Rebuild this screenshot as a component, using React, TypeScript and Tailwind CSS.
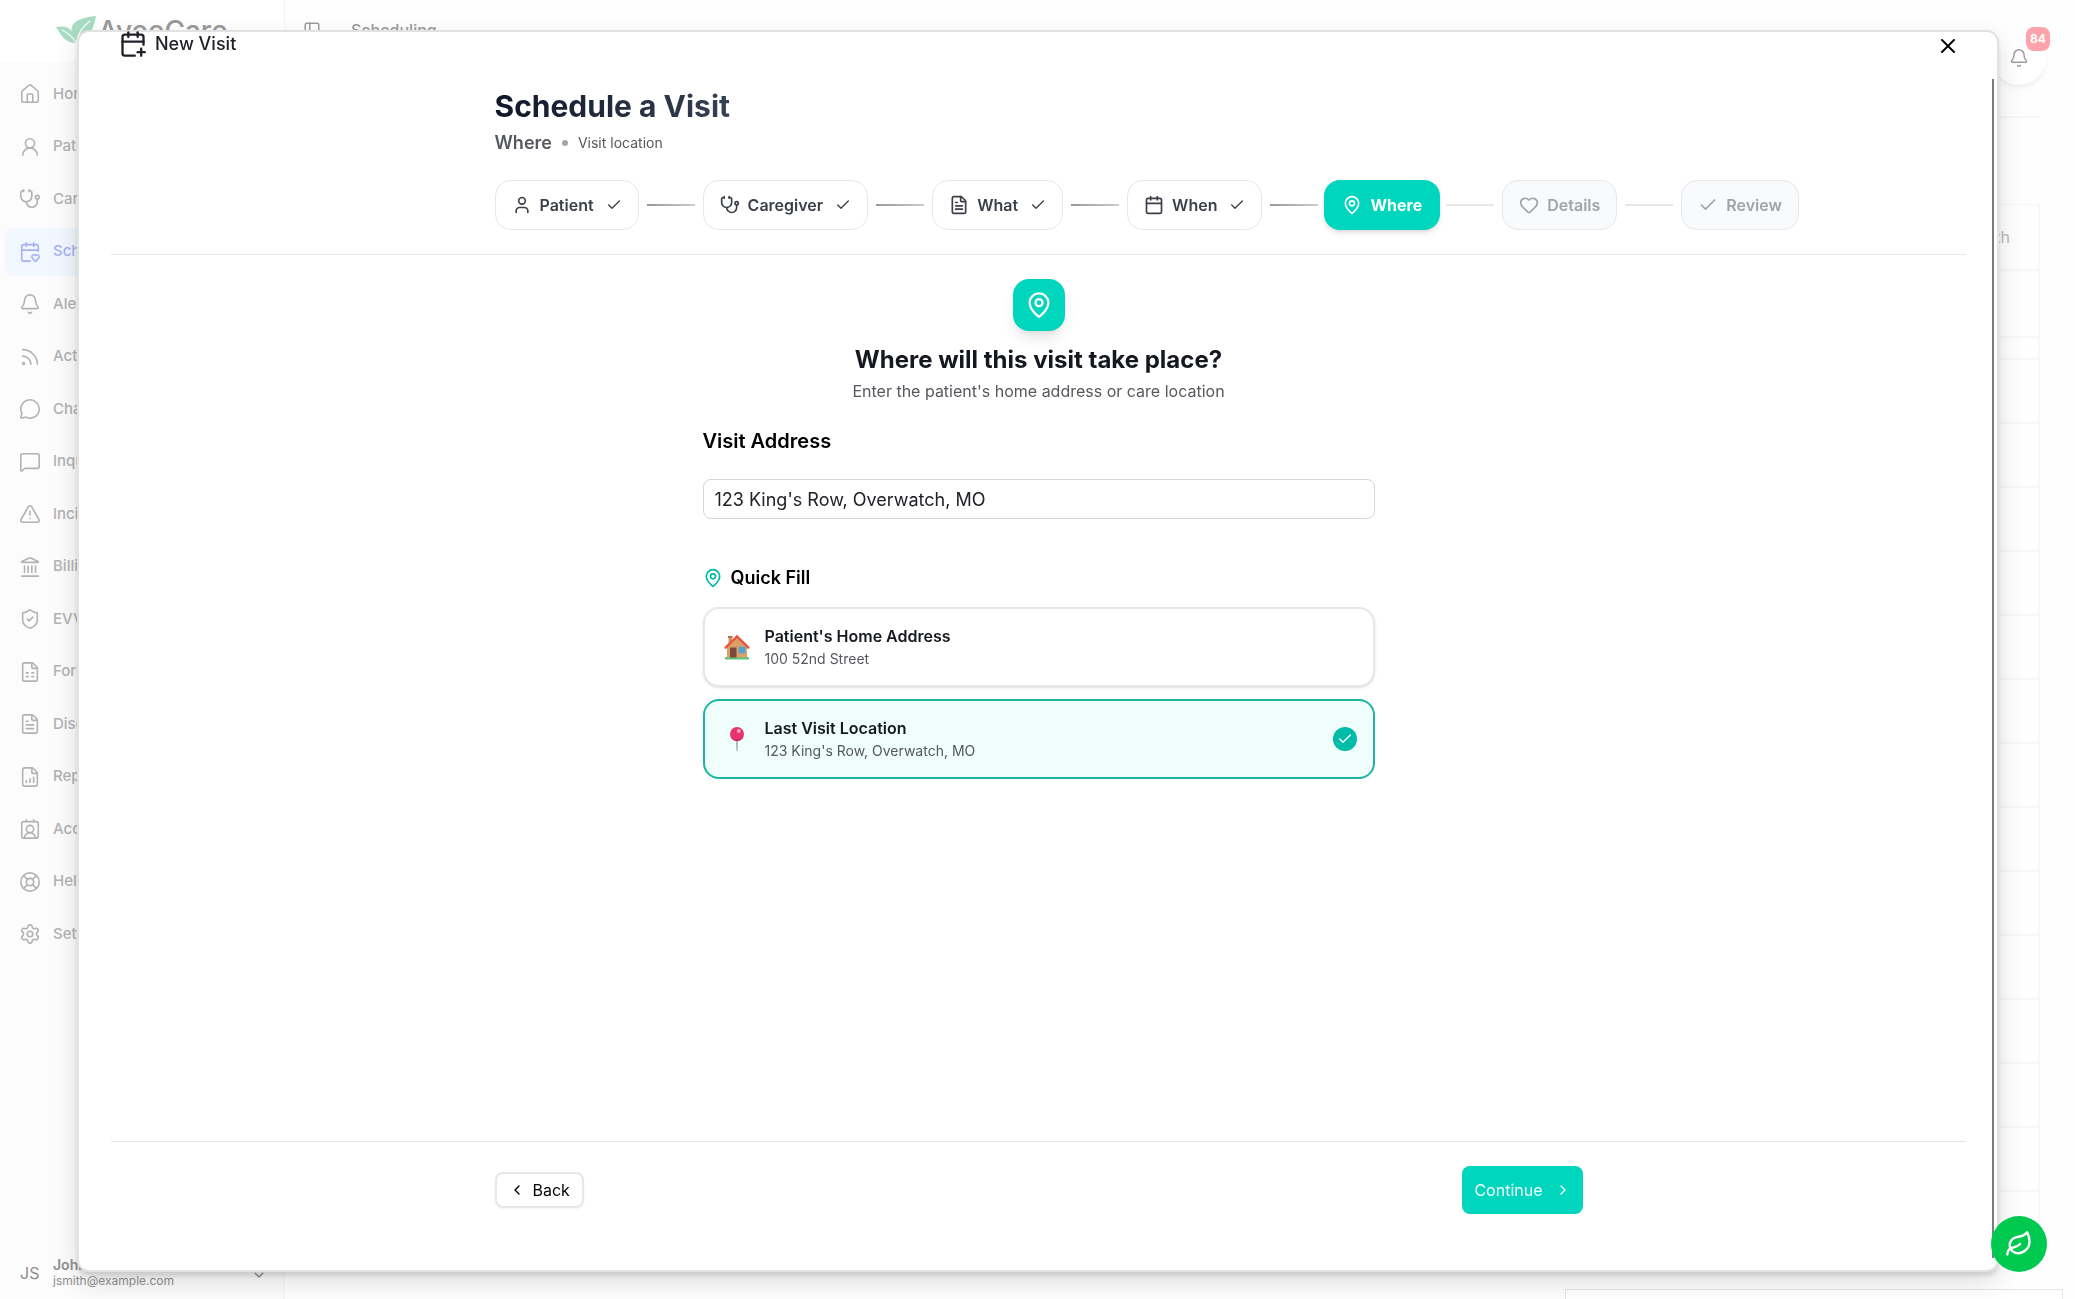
import { useState } from "react";
import {
  Bell,
  Calendar,
  CalendarHeart,
  CalendarPlus,
  Check,
  ChevronLeft,
  ChevronRight,
  ChevronsUpDown,
  ContactRound,
  FileChartColumnIncreasing,
  FileSpreadsheet,
  FileText,
  Heart,
  House,
  Landmark,
  Leaf,
  LifeBuoy,
  MapPin,
  MessageCircle,
  MessageSquare,
  PanelLeft,
  Rss,
  Settings,
  ShieldCheck,
  Stethoscope,
  TriangleAlert,
  User,
  UserRound,
  X,
} from "lucide-react";

const navItems = [
  { label: "Home", icon: House },
  { label: "Patients", icon: UserRound },
  { label: "Caregivers", icon: Stethoscope },
  { label: "Scheduling", icon: CalendarHeart, active: true },
  { label: "Alerts", icon: Bell },
  { label: "Activity", icon: Rss },
  { label: "Chat", icon: MessageCircle },
  { label: "Inquiries", icon: MessageSquare },
  { label: "Incidents", icon: TriangleAlert },
  { label: "Billing", icon: Landmark },
  { label: "EVV", icon: ShieldCheck },
  { label: "Forms", icon: FileSpreadsheet },
  { label: "Discharge", icon: FileText },
  { label: "Reports", icon: FileChartColumnIncreasing },
  { label: "Accounts", icon: ContactRound },
  { label: "Help", icon: LifeBuoy },
  { label: "Settings", icon: Settings },
];

const steps = [
  { label: "Patient", icon: User, state: "done" },
  { label: "Caregiver", icon: Stethoscope, state: "done" },
  { label: "What", icon: FileText, state: "done" },
  { label: "When", icon: Calendar, state: "done" },
  { label: "Where", icon: MapPin, state: "current" },
  { label: "Details", icon: Heart, state: "todo" },
  { label: "Review", icon: Check, state: "todo" },
];

const stepStyles: Record<string, string> = {
  done: "px-4 border border-gray-200 bg-white font-semibold text-[#3b3f47]",
  current: "-mx-0.5 px-[18px] bg-[#00d5be] font-bold text-white shadow-md shadow-black/10",
  todo: "px-4 border border-gray-200 bg-gray-50 font-semibold text-[#a0a3a8]",
};

const quickFills = [
  { title: "Patient's Home Address", address: "100 52nd Street", icon: HomeDrawing },
  { title: "Last Visit Location", address: "123 King's Row, Overwatch, MO", icon: PinDrawing },
];

function HomeDrawing() {
  return (
    <svg viewBox="0 0 26 26" className="size-[26px]" aria-hidden="true">
      <rect x="1" y="23" width="24" height="2.4" rx="1" fill="#4fc878" />
      <path d="M4.5 3h3.5v8H4.5z" fill="#d9955f" />
      <path d="M4 2h4.5v1.8H4z" fill="#b9603c" />
      <path d="M3 13 13 3l10 10v10.5H3z" fill="#dba06a" />
      <path d="M1.6 13.6 13 2.4l11.4 11.2" fill="none" stroke="#e8573d" strokeWidth="2.4" strokeLinecap="round" />
      <rect x="6" y="13.5" width="6.5" height="10" fill="#7b4a3a" />
      <rect x="15" y="13" width="6" height="6" fill="#45a6dd" stroke="#6f9dbb" strokeWidth=".6" />
    </svg>
  );
}

function PinDrawing() {
  return (
    <svg viewBox="0 0 26 26" className="size-[26px]" aria-hidden="true">
      <path d="M12.2 13h1.6l-.3 12h-1z" fill="#9a9a9f" />
      <circle cx="13" cy="8" r="7" fill="#e8336b" />
      <path d="M6.6 10.8a7 7 0 0 0 12.8 0A9 9 0 0 1 6.6 10.8" fill="#cf2460" />
      <circle cx="14.8" cy="5" r="1.9" fill="#f9a3c0" />
    </svg>
  );
}

function Logo() {
  return (
    <div className="flex h-[62px] items-center gap-0.5 pl-14">
      <svg viewBox="0 0 40 28" className="mb-0.5 h-7 w-10" aria-hidden="true">
        <path d="M40 0C28 1 17 4 15.500 12c-.8 5 2 10 4.500 15C31 25 37 16 40 0z" fill="#a8dcc2" />
        <path d="M0 11c6-1 11-1 14.500 3 3 3.500 5 7 5.500 13C10 27 6 21 0 11z" fill="#a8dcc2" />
        <path d="M20 27C22 17 27 10 34 5M19.500 26C16 20 12 17 6 14" fill="none" stroke="#fff" strokeWidth="1.200" />
      </svg>
      <span className="text-[28px] font-medium text-[#9a9a9a]">AveeCare</span>
    </div>
  );
}

function Sidebar() {
  return (
    <aside className="flex h-screen w-[285px] shrink-0 flex-col border-r border-gray-100 bg-[#fcfcfc]">
      <div className="bg-white">
        <Logo />
      </div>
      <nav className="mt-2 flex h-[888px] flex-col justify-between px-[5px]">
        {navItems.map(({ label, icon: Icon, active }) => (
          <a
            key={label}
            href="#"
            className={`flex h-12 items-center gap-3 rounded-lg pl-3.5 text-[15px] font-medium ${
              active ? "bg-[#f1f6ff] text-[#a8b2f3]" : "text-[#b2b2b4]"
            }`}
          >
            <Icon size={22} strokeWidth={1.75} />
            {label}
          </a>
        ))}
      </nav>
      <div className="mt-auto flex h-13 items-center pl-5 pr-4 text-[#8f8f8f]">
        <span className="w-[33px] text-base">JS</span>
        <div className="flex-1">
          <p className="text-sm leading-4 font-semibold">John Smith</p>
          <p className="text-xs leading-4">jsmith@example.com</p>
        </div>
        <ChevronsUpDown size={18} className="mb-1" />
      </div>
    </aside>
  );
}

function Backdrop() {
  return (
    <div className="flex h-screen">
      <Sidebar />
      <main className="relative min-w-0 flex-1 overflow-hidden bg-[#fefefe] pr-[35px] pl-[18px]">
        <header className="flex h-[118px] items-start justify-between border-b-2 border-[#f7f7f7] text-[#9c9c9c]">
          <div className="flex items-center gap-[30px] pt-[18px]">
            <PanelLeft size={18} />
            <span className="text-base font-medium">Scheduling</span>
          </div>
          <button
            aria-label="Notifications"
            className="relative -mr-1.5 mt-[31px] flex size-[54px] items-center justify-center rounded-full bg-white shadow-md shadow-black/5"
          >
            <Bell size={20} strokeWidth={1.75} />
            <span className="absolute -top-1 -right-1 flex size-6 items-center justify-center rounded-lg bg-[#ffa3aa] text-xs font-bold text-white">
              84
            </span>
          </button>
        </header>
        <table className="mt-[86px] w-full border-t border-r-2 border-[#f7f7f7]">
          <thead>
            <tr className="h-[65px] border-b-2 border-[#f7f7f7]">
              <th className="pr-7 text-right text-base font-normal text-[#bababa]">Month</th>
            </tr>
          </thead>
          <tbody>
            <tr className="h-[67px] border-b-2 border-[#f7f7f7]"><td /></tr>
            <tr className="h-[22px] border-b-2 border-[#f7f7f7]"><td /></tr>
            {Array.from({ length: 14 }, (_, i) => (
              <tr key={i} className="h-16 border-b-2 border-[#f7f7f7]"><td /></tr>
            ))}
          </tbody>
        </table>
        {/* status card peeking in at the bottom edge */}
        <div className="absolute right-3 bottom-0 h-2.5 w-[498px] border border-b-0 border-gray-200 bg-white" />
      </main>
    </div>
  );
}

function StepNav() {
  return (
    <ol className="mt-6 flex w-max items-center gap-2">
      {steps.map(({ label, icon: Icon, state }, i) => (
        <li key={label} className="flex items-center gap-2">
          {i > 0 && (
            <span
              className={`h-0.5 w-12 ${
                steps[i - 1].state === "done" ? "bg-linear-to-r from-[#999] to-[#ccc]" : "bg-gray-200"
              }`}
            />
          )}
          <button
            disabled={state === "todo"}
            aria-current={state === "current" ? "step" : undefined}
            className={`flex h-[50px] items-center gap-2 rounded-2xl text-base ${stepStyles[state]}`}
          >
            <Icon size={20} />
            {label}
            {state === "done" && <Check size={16} className="ml-1" />}
          </button>
        </li>
      ))}
    </ol>
  );
}

function WhereStep() {
  const [address, setAddress] = useState("123 King's Row, Overwatch, MO");

  return (
    <section className="mx-auto flex w-full max-w-2xl flex-col pt-6">
      <div className="mx-auto flex size-[52px] items-center justify-center rounded-2xl bg-[#00d5be] text-white shadow-lg shadow-black/10">
        <MapPin size={28} />
      </div>
      <h2 className="mt-[13px] text-center text-2xl font-bold text-[#15181f]">Where will this visit take place?</h2>
      <p className="mt-[3px] text-center text-base text-[#55585e]">Enter the patient's home address or care location</p>

      <label htmlFor="address" className="mt-6 text-xl leading-7 font-semibold">
        Visit Address
      </label>
      <input
        id="address"
        type="text"
        value={address}
        onChange={(e) => setAddress(e.target.value)}
        className="mt-6 h-10 rounded-lg border border-gray-300 bg-white px-[11px] text-lg text-[#202228]"
      />

      <h3 className="mt-[45px] flex items-center gap-2 text-lg font-semibold">
        <MapPin size={20} className="text-[#00bba7]" />
        Quick Fill
      </h3>
      <div className="mt-[15px] flex flex-col gap-3">
        {quickFills.map(({ title, address: value, icon: Drawing }) => {
          const selected = value === address;
          return (
            <button
              key={title}
              aria-pressed={selected}
              onClick={() => setAddress(value)}
              className={`flex h-20 items-center gap-3 rounded-2xl border-2 px-4 text-left ${
                selected ? "border-[#1bb5a2] bg-[#effdfb]" : "border-gray-200 bg-white shadow-sm"
              }`}
            >
              <span className="flex w-8 justify-center">
                <Drawing />
              </span>
              <span className="flex-1">
                <span className="block text-base font-semibold text-[#15181f]">{title}</span>
                <span className="block text-sm leading-[22px] text-[#55585e]">{value}</span>
              </span>
              {selected && (
                <span className="flex size-6 items-center justify-center rounded-full bg-[#00bba7] text-white">
                  <Check size={16} />
                </span>
              )}
            </button>
          );
        })}
      </div>
    </section>
  );
}

function VisitDialog() {
  return (
    <div className="fixed inset-0 flex pt-[30px] pr-[76px] pb-[27px] pl-[77px]">
      <div
        role="dialog"
        aria-label="New Visit"
        className="flex flex-1 flex-col rounded-xl border-2 border-[#e2e2e2] bg-white shadow-[0_4px_4px_rgba(0,0,0,0.11),0_10px_26px_rgba(0,0,0,0.13)]"
      >
        <div className="flex h-7 items-start justify-between pr-[35px] pl-10">
          <div className="flex h-6 items-center gap-2 text-lg font-medium text-[#202228]">
            <CalendarPlus size={28} />
            New Visit
          </div>
          <button aria-label="Close" className="flex size-7 items-center justify-center">
            <X size={24} />
          </button>
        </div>

        <div className="mt-[19px] mr-[3px] mb-3 flex flex-1 flex-col border-r-2 border-[#7c7c7c] pr-[26px] pl-8">
          <div className="border-b border-gray-200 pt-[9px] pb-6">
            <div className="mx-auto max-w-6xl px-8">
              <h1 className="w-fit bg-linear-to-r from-gray-900 to-gray-700 bg-clip-text text-3xl font-bold text-transparent">
                Schedule a Visit
              </h1>
              <div className="mt-[5px] mb-[-1px] flex h-7 items-center gap-2.5 text-[#55585e]">
                <span className="text-lg font-semibold">Where</span>
                <span className="size-1.5 rounded-full bg-[#a6a6aa]" />
                <span className="text-sm">Visit location</span>
              </div>
              <StepNav />
            </div>
          </div>

          <WhereStep />

          <div className="mt-auto border-t border-gray-200 pt-6 pb-11">
            <div className="mx-auto flex max-w-6xl items-center justify-between px-8">
              <button className="flex h-9 items-center gap-2 rounded-lg border-2 border-gray-200 bg-white px-3 text-base shadow-xs">
                <ChevronLeft size={16} />
                Back
              </button>
              <button className="flex h-12 items-center gap-3 rounded-lg bg-[#00d5be] px-3 text-base text-teal-50">
                Continue
                <ChevronRight size={16} />
              </button>
            </div>
          </div>
        </div>
      </div>
    </div>
  );
}

export default function App() {
  return (
    <div className="h-screen overflow-hidden bg-white font-['Inter',sans-serif] text-black">
      <Backdrop />
      <VisitDialog />
      <button
        aria-label="Assistant"
        className="fixed right-7 bottom-[27px] flex size-14 items-center justify-center rounded-full bg-[#00c950] text-white"
      >
        <Leaf size={28} />
      </button>
    </div>
  );
}
